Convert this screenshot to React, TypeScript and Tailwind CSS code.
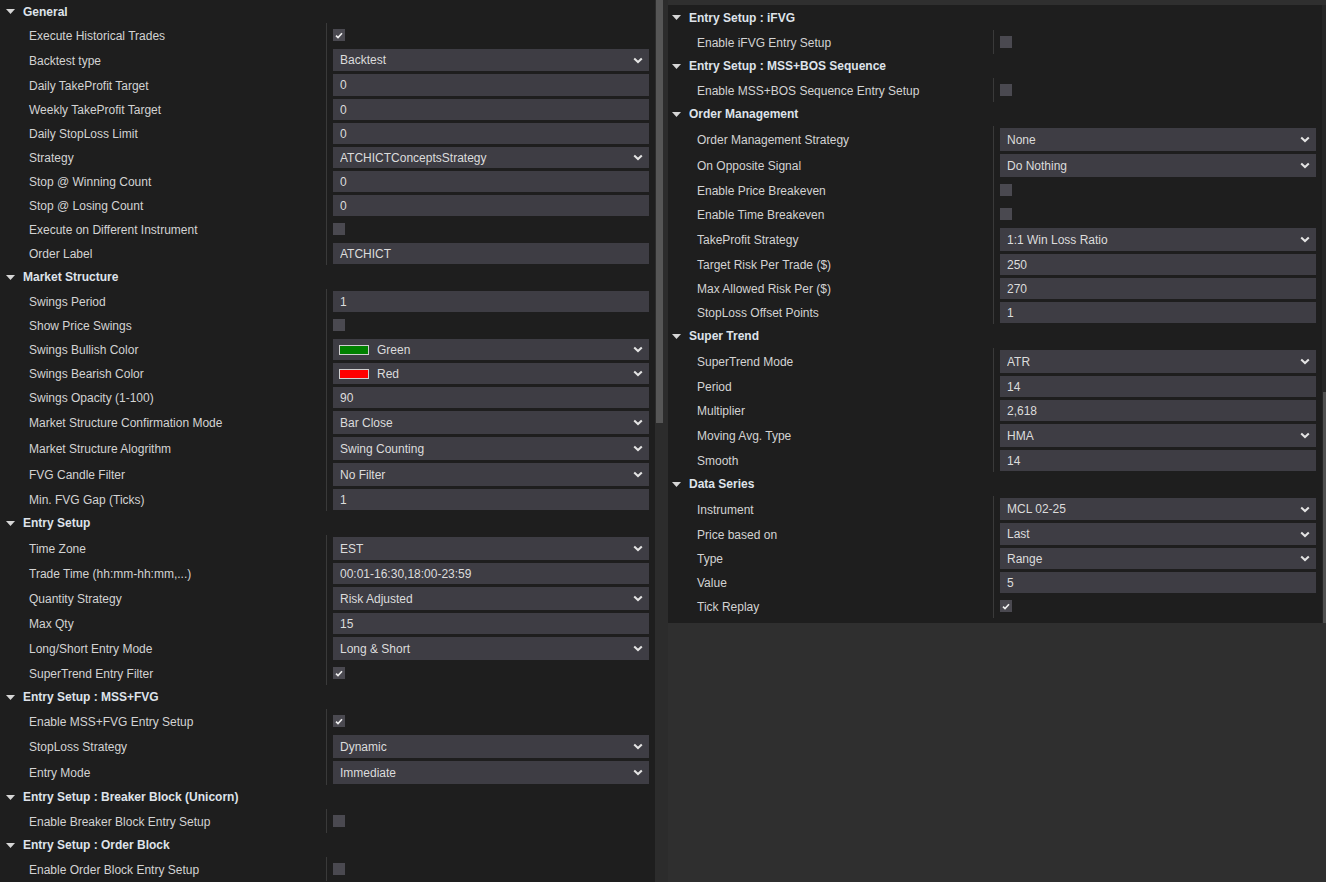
import { Fragment } from "react";

type Row =
  | { kind: "header"; label: string; h: number }
  | { kind: "text"; label: string; value: string; h: number }
  | { kind: "select"; label: string; value: string; h: number; swatch?: string }
  | { kind: "check"; label: string; checked: boolean; h: number };

const ROW_H: Record<number, string> = {
  23: "h-[23px]",
  24: "h-[24px]",
  25: "h-[25px]",
  26: "h-[26px]",
};

const BOX_H: Record<number, string> = {
  23: "h-[20px]",
  24: "h-[21px]",
  25: "h-[22px]",
  26: "h-[23px]",
};

const leftRows: Row[] = [
  { kind: "header", label: "General", h: 23 },
  { kind: "check", label: "Execute Historical Trades", checked: true, h: 24 },
  { kind: "select", label: "Backtest type", value: "Backtest", h: 25 },
  { kind: "text", label: "Daily TakeProfit Target", value: "0", h: 25 },
  { kind: "text", label: "Weekly TakeProfit Target", value: "0", h: 24 },
  { kind: "text", label: "Daily StopLoss Limit", value: "0", h: 24 },
  { kind: "select", label: "Strategy", value: "ATCHICTConceptsStrategy", h: 24 },
  { kind: "text", label: "Stop @ Winning Count", value: "0", h: 24 },
  { kind: "text", label: "Stop @ Losing Count", value: "0", h: 24 },
  { kind: "check", label: "Execute on Different Instrument", checked: false, h: 24 },
  { kind: "text", label: "Order Label", value: "ATCHICT", h: 24 },
  { kind: "header", label: "Market Structure", h: 24 },
  { kind: "text", label: "Swings Period", value: "1", h: 24 },
  { kind: "check", label: "Show Price Swings", checked: false, h: 24 },
  { kind: "select", label: "Swings Bullish Color", value: "Green", swatch: "bg-[#008000]", h: 24 },
  { kind: "select", label: "Swings Bearish Color", value: "Red", swatch: "bg-[#ff0000]", h: 24 },
  { kind: "text", label: "Swings Opacity (1-100)", value: "90", h: 24 },
  { kind: "select", label: "Market Structure Confirmation Mode", value: "Bar Close", h: 26 },
  { kind: "select", label: "Market Structure Alogrithm", value: "Swing Counting", h: 26 },
  { kind: "select", label: "FVG Candle Filter", value: "No Filter", h: 26 },
  { kind: "text", label: "Min. FVG Gap (Ticks)", value: "1", h: 24 },
  { kind: "header", label: "Entry Setup", h: 24 },
  { kind: "select", label: "Time Zone", value: "EST", h: 26 },
  { kind: "text", label: "Trade Time (hh:mm-hh:mm,...)", value: "00:01-16:30,18:00-23:59", h: 24 },
  { kind: "select", label: "Quantity Strategy", value: "Risk Adjusted", h: 26 },
  { kind: "text", label: "Max Qty", value: "15", h: 24 },
  { kind: "select", label: "Long/Short Entry Mode", value: "Long & Short", h: 26 },
  { kind: "check", label: "SuperTrend Entry Filter", checked: true, h: 24 },
  { kind: "header", label: "Entry Setup : MSS+FVG", h: 24 },
  { kind: "check", label: "Enable MSS+FVG Entry Setup", checked: true, h: 24 },
  { kind: "select", label: "StopLoss Strategy", value: "Dynamic", h: 26 },
  { kind: "select", label: "Entry Mode", value: "Immediate", h: 26 },
  { kind: "header", label: "Entry Setup : Breaker Block (Unicorn)", h: 24 },
  { kind: "check", label: "Enable Breaker Block Entry Setup", checked: false, h: 24 },
  { kind: "header", label: "Entry Setup : Order Block", h: 24 },
  { kind: "check", label: "Enable Order Block Entry Setup", checked: false, h: 24 },
];

const rightRows: Row[] = [
  { kind: "header", label: "Entry Setup : iFVG", h: 25 },
  { kind: "check", label: "Enable iFVG Entry Setup", checked: false, h: 24 },
  { kind: "header", label: "Entry Setup : MSS+BOS Sequence", h: 24 },
  { kind: "check", label: "Enable MSS+BOS Sequence Entry Setup", checked: false, h: 24 },
  { kind: "header", label: "Order Management", h: 24 },
  { kind: "select", label: "Order Management Strategy", value: "None", h: 26 },
  { kind: "select", label: "On Opposite Signal", value: "Do Nothing", h: 26 },
  { kind: "check", label: "Enable Price Breakeven", checked: false, h: 24 },
  { kind: "check", label: "Enable Time Breakeven", checked: false, h: 24 },
  { kind: "select", label: "TakeProfit Strategy", value: "1:1 Win Loss Ratio", h: 26 },
  { kind: "text", label: "Target Risk Per Trade ($)", value: "250", h: 24 },
  { kind: "text", label: "Max Allowed Risk Per ($)", value: "270", h: 24 },
  { kind: "text", label: "StopLoss Offset Points", value: "1", h: 24 },
  { kind: "header", label: "Super Trend", h: 24 },
  { kind: "select", label: "SuperTrend Mode", value: "ATR", h: 26 },
  { kind: "text", label: "Period", value: "14", h: 24 },
  { kind: "text", label: "Multiplier", value: "2,618", h: 24 },
  { kind: "select", label: "Moving Avg. Type", value: "HMA", h: 26 },
  { kind: "text", label: "Smooth", value: "14", h: 24 },
  { kind: "header", label: "Data Series", h: 24 },
  { kind: "select", label: "Instrument", value: "MCL 02-25", h: 25 },
  { kind: "select", label: "Price based on", value: "Last", h: 25 },
  { kind: "select", label: "Type", value: "Range", h: 24 },
  { kind: "text", label: "Value", value: "5", h: 24 },
  { kind: "check", label: "Tick Replay", checked: true, h: 24 },
];

function Chevron() {
  return (
    <svg width="10" height="7" viewBox="0 0 10 7" className="shrink-0">
      <path d="M1.2 1.4 L5 5 L8.8 1.4" fill="none" stroke="#e4e4e4" strokeWidth="2" />
    </svg>
  );
}

function Caret() {
  return (
    <svg width="9" height="5" viewBox="0 0 9 5" className="shrink-0">
      <path d="M0 0 H9 L4.5 5 Z" fill="#d6d6d6" />
    </svg>
  );
}

function CheckBox({ checked }: { checked: boolean }) {
  return (
    <div className="flex h-[12px] w-[12px] items-center justify-center bg-[#4a4950]">
      {checked && (
        <svg width="8" height="7" viewBox="0 0 8 7">
          <path d="M1 3.6 L3 5.6 L7 1.2" fill="none" stroke="#f0f0f0" strokeWidth="1.6" />
        </svg>
      )}
    </div>
  );
}

function PropertyRow({ row, labelW, caretPad }: { row: Row; labelW: string; caretPad: string }) {
  if (row.kind === "header") {
    return (
      <div className={`flex items-center ${ROW_H[row.h]} ${caretPad}`}>
        <Caret />
        <span className="ml-[8px] text-[12px] font-bold text-[#dfe3ea]">{row.label}</span>
      </div>
    );
  }

  return (
    <div className={`flex ${ROW_H[row.h]}`}>
      <div className={`${labelW} flex shrink-0 items-center pl-[29px] pt-[2px] text-[12px] text-[#d3d3d3]`}>
        {row.label}
      </div>
      <div className="flex min-w-0 flex-1 border-l border-[#3a3a3a] pl-[6px] pr-[6px]">
        {row.kind === "check" ? (
          <div className="flex h-full items-center">
            <CheckBox checked={row.checked} />
          </div>
        ) : (
          <div className="flex w-full pt-[2px]">
            <div
              className={`flex w-full items-center bg-[#3e3d44] text-[12px] text-[#dcdcdc] ${BOX_H[row.h]} ${
                row.kind === "select" ? "pr-[6px]" : ""
              } ${row.kind === "select" && row.swatch ? "pl-[6px]" : "pl-[7px]"}`}
            >
              {row.kind === "select" && row.swatch && (
                <span className={`mr-[8px] h-[10px] w-[30px] border border-[#cfcfcf] ${row.swatch}`} />
              )}
              <span className="flex-1 truncate">{row.value}</span>
              {row.kind === "select" && <Chevron />}
            </div>
          </div>
        )}
      </div>
    </div>
  );
}

function PropertyList({ rows, labelW, caretPad }: { rows: Row[]; labelW: string; caretPad: string }) {
  return (
    <div className="flex flex-col">
      {rows.map((row, i) => (
        <Fragment key={i}>
          <PropertyRow row={row} labelW={labelW} caretPad={caretPad} />
        </Fragment>
      ))}
    </div>
  );
}

export default function App() {
  return (
    <div
      className="flex h-[882px] w-[1326px] overflow-hidden bg-[#2f2f2f]"
      style={{ fontFamily: '"Liberation Sans", Arial, sans-serif' }}
    >
      {/* Left grid */}
      <div className="h-full w-[655px] shrink-0 overflow-hidden bg-[#1e1e1e]">
        <PropertyList rows={leftRows} labelW="w-[326px]" caretPad="pl-[6px]" />
      </div>

      {/* Left scrollbar */}
      <div className="relative h-full w-[13px] shrink-0 bg-[#2c2c2c]">
        <div className="absolute left-[1px] top-0 h-[423px] w-[7px] bg-[#565656]" />
      </div>

      {/* Right grid */}
      <div className="flex flex-1 flex-col pt-[5px]">
        <div className="flex h-[618px] w-[658px]">
          <div className="w-[654px] bg-[#1e1e1e]">
            <PropertyList rows={rightRows} labelW="w-[325px]" caretPad="pl-[4px]" />
          </div>
          <div className="relative w-[4px] bg-[#262626]">
            <div className="absolute left-[1px] top-[387px] h-[231px] w-[3px] bg-[#505050]" />
          </div>
        </div>
      </div>
    </div>
  );
}
